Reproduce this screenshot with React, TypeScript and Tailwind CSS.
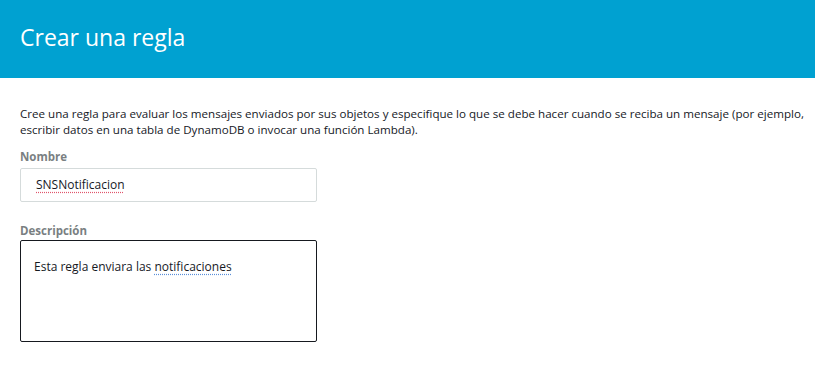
import React from "react";

const App = () => {
  return (
    <div className="w-[815px] h-[366px] bg-white font-['Open_Sans',sans-serif] text-[#16191f]">
      {/* Header */}
      <div className="h-[78px] bg-[#00a1d1] flex items-center pl-5">
        <h1 className="text-[23px] font-normal text-white leading-none pb-1">
          Crear una regla
        </h1>
      </div>

      <div className="pl-5 pr-2 pt-[28px]">
        <p className="text-[11.6px] leading-[16px]">
          Cree una regla para evaluar los mensajes enviados por sus objetos y especifique lo que se debe hacer cuando se reciba un mensaje (por ejemplo, escribir datos en una tabla de DynamoDB o invocar una función Lambda).
        </p>

        <div className="mt-[11px]">
          <div className="text-[11.5px] font-bold text-[#7a7f82] leading-[16px]">Nombre</div>
          <div className="mt-[3px] w-[297px] h-[34px] border border-[#d5dbdb] rounded-[2px] flex items-center pl-[15px]">
            <span className="text-[12px] underline decoration-dotted decoration-[#e0556b] underline-offset-[3px]">
              SNSNotificacion
            </span>
          </div>
        </div>

        <div className="mt-[21px]">
          <div className="text-[11.5px] font-bold text-[#7a7f82] leading-[16px]">Descripción</div>
          <div className="mt-[1px] w-[297px] h-[102px] border border-[#16191f] rounded-[2px] pl-[13px] pt-[12px]">
            <span className="text-[12px]">
              Esta regla enviara las{" "}
              <span className="underline decoration-dotted decoration-[#5b8fd9] underline-offset-[3px]">
                notificaciones
              </span>
            </span>
          </div>
        </div>
      </div>
    </div>
  );
};

export default App;
